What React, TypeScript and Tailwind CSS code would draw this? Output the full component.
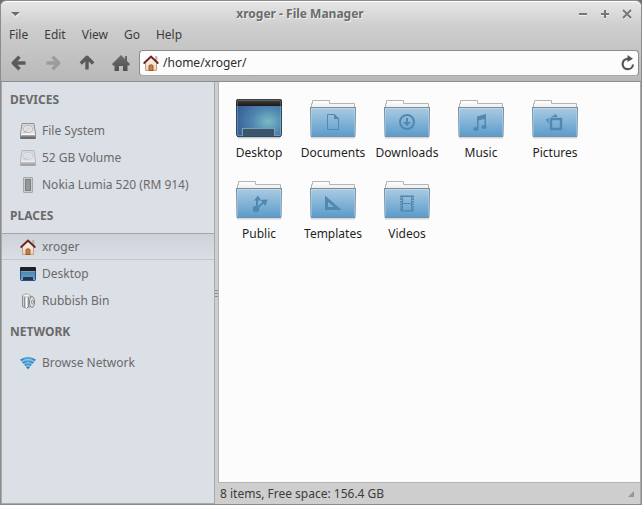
import { useState, type ReactNode } from 'react';

const menus = ['File', 'Edit', 'View', 'Go', 'Help'];

const sections = [
  {
    title: 'DEVICES',
    items: [
      { label: 'File System', icon: <DriveIcon /> },
      { label: '52 GB Volume', icon: <DriveIcon faded /> },
      { label: 'Nokia Lumia 520 (RM 914)', icon: <PhoneIcon /> },
    ],
  },
  {
    title: 'PLACES',
    items: [
      { label: 'xroger', icon: <HouseIcon /> },
      { label: 'Desktop', icon: <SmallDesktopIcon /> },
      { label: 'Rubbish Bin', icon: <BinIcon /> },
    ],
  },
  {
    title: 'NETWORK',
    items: [{ label: 'Browse Network', icon: <WifiIcon /> }],
  },
];

const files = [
  { label: 'Desktop', icon: <DesktopIcon /> },
  {
    label: 'Documents',
    icon: (
      <FolderIcon>
        <path d="M18.5 20.5h7l4 4v11h-11z" fill="none" stroke="#5088b0" />
        <path d="M25 20v5h5z" fill="#5088b0" />
      </FolderIcon>
    ),
  },
  {
    label: 'Downloads',
    icon: (
      <FolderIcon>
        <circle cx="24" cy="28" r="7" fill="none" stroke="#5088b0" strokeWidth="2" />
        <path d="M23 24h2v4h3l-4 4-4-4h3z" fill="#5088b0" />
      </FolderIcon>
    ),
  },
  {
    label: 'Music',
    icon: (
      <FolderIcon>
        <path d="M20 22.5l9-2.5v13h-1.5v-8l-6 1.6V35H20z" fill="#5088b0" />
        <ellipse cx="19" cy="35" rx="2.6" ry="2" fill="#5088b0" />
        <ellipse cx="27" cy="33" rx="2.6" ry="2" fill="#5088b0" />
      </FolderIcon>
    ),
  },
  {
    label: 'Pictures',
    icon: (
      <FolderIcon>
        <path d="M20 25h10v10H20z" fill="none" stroke="#5088b0" strokeWidth="2.4" />
        <path d="M20 23l5-3 1.5 3zM17.5 24v6L15 25.5z" fill="#5088b0" />
      </FolderIcon>
    ),
  },
  {
    label: 'Public',
    icon: (
      <FolderIcon>
        <circle cx="21" cy="34" r="3.2" fill="#5088b0" />
        <path d="M22 33V24M21.5 33.5l7-6" stroke="#5088b0" strokeWidth="2" fill="none" />
        <path d="M19 25.5l4-5 3 5zM25.5 25l7-.5-2 6.5z" fill="#5088b0" />
      </FolderIcon>
    ),
  },
  {
    label: 'Templates',
    icon: (
      <FolderIcon>
        <path d="M16 20.5L32.5 35H16zM19 27v5h6z" fill="#5088b0" fillRule="evenodd" />
      </FolderIcon>
    ),
  },
  {
    label: 'Videos',
    icon: (
      <FolderIcon>
        <path d="M18 21v15M30 21v15" stroke="#5088b0" strokeWidth="2" strokeDasharray="1.5 1" />
        <path d="M19.5 21.5h9v7h-9zM19.5 28.5h9V36h-9zM17 21h14M17 36h14" fill="none" stroke="#5088b0" />
      </FolderIcon>
    ),
  },
];

function Gradients() {
  return (
    <svg className="absolute size-0" aria-hidden="true">
      <defs>
        <linearGradient id="folder" x1="0" y1="0" x2="0" y2="1">
          <stop offset="0" stopColor="#abcbe2" />
          <stop offset="1" stopColor="#5b9bcb" />
        </linearGradient>
        <linearGradient id="tab" x1="0" y1="0" x2="0" y2="1">
          <stop offset="0" stopColor="#ffffff" />
          <stop offset="1" stopColor="#eaeaea" />
        </linearGradient>
        <radialGradient id="screen" cx="0.7" cy="0.6" r="0.7">
          <stop offset="0" stopColor="#78bac4" />
          <stop offset="0.5" stopColor="#4f87b0" />
          <stop offset="1" stopColor="#3a6397" />
        </radialGradient>
        <linearGradient id="smallScreen" x1="0" y1="0" x2="0" y2="1">
          <stop offset="0" stopColor="#3f73a6" />
          <stop offset="1" stopColor="#6fa8cd" />
        </linearGradient>
        <linearGradient id="bar" x1="0" y1="0" x2="0" y2="1">
          <stop offset="0" stopColor="#454545" />
          <stop offset="1" stopColor="#191919" />
        </linearGradient>
        <linearGradient id="drive" x1="0" y1="0" x2="0" y2="1">
          <stop offset="0" stopColor="#d2d2d2" />
          <stop offset="1" stopColor="#f4f4f4" />
        </linearGradient>
        <linearGradient id="driveBase" x1="0" y1="0" x2="0" y2="1">
          <stop offset="0" stopColor="#b4b4b4" />
          <stop offset="1" stopColor="#4c4c4c" />
        </linearGradient>
        <linearGradient id="wall" x1="0" y1="0" x2="0" y2="1">
          <stop offset="0" stopColor="#fbf7f2" />
          <stop offset="1" stopColor="#ecd0b8" />
        </linearGradient>
        <linearGradient id="wifi" x1="0" y1="0" x2="0" y2="1">
          <stop offset="0" stopColor="#5fb0de" />
          <stop offset="1" stopColor="#2874b4" />
        </linearGradient>
        <linearGradient id="tool" x1="0" y1="0" x2="0" y2="1">
          <stop offset="0" stopColor="#6e6e6e" />
          <stop offset="1" stopColor="#505050" />
        </linearGradient>
      </defs>
    </svg>
  );
}

function FolderIcon({ children }: { children: ReactNode }) {
  return (
    <svg width="48" height="48" viewBox="0 0 48 48" aria-hidden="true">
      <path d="M2 43.5h44" stroke="#000" strokeOpacity="0.15" strokeWidth="2" />
      <path d="M2.5 15V9.5h1v-3h17v3h25V15z" fill="url(#tab)" stroke="#b4b4b4" />
      <path d="M1.5 13.5h45l-.5 29H2z" fill="url(#folder)" stroke="#7292aa" strokeLinejoin="round" />
      <path d="M2.5 41.5v-27h43v27" fill="none" stroke="#fff" strokeOpacity="0.25" />
      <path d="M1 13.5h46" stroke="#7b8d9b" />
      {children}
    </svg>
  );
}

function DesktopIcon() {
  return (
    <svg width="48" height="48" viewBox="0 0 48 48" aria-hidden="true">
      <path d="M3 43.5h42" stroke="#000" strokeOpacity="0.2" strokeWidth="2" />
      <rect x="1.5" y="5.5" width="45" height="37" rx="2" fill="url(#screen)" stroke="#2d4566" />
      <path d="M1 12V7q0-2 2-2h42q2 0 2 2v5z" fill="url(#bar)" />
      <rect x="2.5" y="6.5" width="43" height="35" rx="1" fill="none" stroke="#fff" strokeOpacity="0.2" />
      <rect x="7.5" y="34.5" width="32" height="8" fill="#3b566c" stroke="#7c9fb6" />
      <path d="M2 42.5h44" stroke="#2d4566" />
    </svg>
  );
}

function DriveIcon({ faded = false }: { faded?: boolean }) {
  return (
    <svg width="16" height="16" viewBox="0 0 16 16" className={faded ? 'opacity-50' : ''} aria-hidden="true">
      <path d="M2 .5h12l1.5 10.5v4.5H.5V11z" fill="url(#drive)" stroke="#939393" strokeLinejoin="round" />
      <path d="M.5 12h15v3.5H.5z" fill="url(#driveBase)" />
      <path d="M1 11.5h14" stroke="#fafafa" />
      <ellipse cx="8" cy="6" rx="4.5" ry="3.5" fill="#e6e6e6" stroke="#bcbcbc" />
      <ellipse cx="8" cy="6" rx="1.5" ry="1" fill="#fff" stroke="#bcbcbc" strokeWidth="0.7" />
      <path d="M3.5 9.5L6.5 8" stroke="#a2a2a2" />
    </svg>
  );
}

function PhoneIcon() {
  return (
    <svg width="16" height="16" viewBox="0 0 16 16" aria-hidden="true">
      <rect x="3.5" y=".5" width="9" height="15" rx="0.5" fill="#c9cccf" stroke="#a4a6a8" />
      <rect x="5.5" y="2.5" width="5" height="11" fill="#92979a" stroke="#7b7f82" />
    </svg>
  );
}

function HouseIcon() {
  return (
    <svg width="16" height="16" viewBox="0 0 16 16" aria-hidden="true">
      <path d="M12.5 1.5H14v4h-1.500z" fill="#d8c4b4" stroke="#a58a78" strokeWidth="0.5" />
      <path d="M2.5 7.5L8 2.5l5.500 5v8h-11z" fill="url(#wall)" stroke="#c0a18b" />
      <path d="M6 15.5v-5q2-1.500 4 0v5z" fill="#c8803f" stroke="#8a4c22" strokeWidth="0.8" />
      <path d="M1.200 8L8 1.500 14.800 8" fill="none" stroke="#6a2222" strokeWidth="1.8" strokeLinecap="round" />
    </svg>
  );
}

function SmallDesktopIcon() {
  return (
    <svg width="16" height="16" viewBox="0 0 16 16" aria-hidden="true">
      <rect x=".5" y="1.5" width="15" height="13" rx="1" fill="url(#smallScreen)" stroke="#2d4f7c" />
      <path d="M0 5V2q0-1 1-1h14q1 0 1 1v3z" fill="#1d2024" />
      <path d="M1 5.5h14" stroke="#76a5c4" />
      <path d="M3 11h10v3H3z" fill="#22394f" />
    </svg>
  );
}

function BinIcon() {
  return (
    <svg width="16" height="16" viewBox="0 0 16 16" aria-hidden="true">
      <path d="M2.5 2.5q4-3 8 0v11q-4 3-8 0z" fill="#cfd1d3" stroke="#8b8e92" />
      <path d="M4.5 4v10M8.5 4v10" stroke="#8f9296" />
      <path d="M6.5 4v11" stroke="#fff" />
      <ellipse cx="6.500" cy="2.500" rx="3.500" ry="1.500" fill="#f2f2f2" stroke="#a8abae" strokeWidth="0.7" />
      <ellipse cx="12" cy="9" rx="2.500" ry="5.500" fill="#e4e4e4" stroke="#808387" />
      <ellipse cx="12.500" cy="9" rx="1" ry="2" fill="none" stroke="#808387" strokeWidth="0.8" />
    </svg>
  );
}

function WifiIcon() {
  return (
    <svg width="16" height="16" viewBox="0 0 16 16" fill="none" stroke="url(#wifi)" strokeWidth="2" aria-hidden="true">
      <path d="M8 14L.5 5.500q7.500-5.500 15 0z" fill="#8fc3e4" stroke="none" />
      <path d="M.7 5.300q7.300-5.200 14.600 0" />
      <path d="M2.800 7.800q5.200-3.800 10.400 0" />
      <path d="M4.900 10.200q3.100-2.400 6.200 0" />
      <path d="M6 12l2 2.200 2-2.200q-2-1.200-4 0z" fill="#2f7fbd" stroke="none" />
    </svg>
  );
}

function ArrowIcon({ className = '' }: { className?: string }) {
  return (
    <svg width="16" height="16" viewBox="0 0 16 16" className={className} aria-hidden="true">
      <path
        d="M14.500 8H3M8.500 1.800L2.300 8l6.200 6.200"
        fill="none"
        stroke="#5a5a5a"
        strokeWidth="3.4"
        strokeLinejoin="round"
      />
    </svg>
  );
}

function HomeIcon() {
  return (
    <svg width="18" height="16" viewBox="0 0 18 16" aria-hidden="true">
      <path d="M9 0l4 4V1h2v5l3 3-1 1.500h-1.500V16H11v-5H7v5H2.500v-5.500H1L0 9z" fill="url(#tool)" />
    </svg>
  );
}

function ReloadIcon() {
  return (
    <svg width="14" height="16" viewBox="0 0 14 16" aria-hidden="true">
      <path d="M12 9.500A5.200 5.200 0 1 1 7 3.800" fill="none" stroke="#555" strokeWidth="2.2" />
      <path d="M6.500 0l5.500 3.800-5.500 3.200z" fill="#555" />
    </svg>
  );
}

function TitleBar() {
  return (
    <header className="flex h-[23px] items-center px-2 text-[#6c6c6c]">
      <button aria-label="Window menu" className="w-5 pl-0.5">
        <svg width="10" height="6" viewBox="0 0 10 6">
          <path d="M1 2l4 4 4-4z" fill="#fff" />
          <path d="M0 1h9L4.500 5z" fill="#6c6c6c" />
        </svg>
      </button>
      <h1 className="flex-1 text-center text-xs font-bold [text-shadow:1px_1px_0_#eee]">xroger - File Manager</h1>
      <div className="flex w-[62px] justify-end gap-3 pr-px">
        <button aria-label="Minimise">
          <svg width="10" height="10" viewBox="0 0 10 10" strokeWidth="2" fill="none">
            <path d="M1 6h8" stroke="#eee" />
            <path d="M1 5h8" stroke="#777" />
          </svg>
        </button>
        <button aria-label="Maximise">
          <svg width="10" height="10" viewBox="0 0 10 10" strokeWidth="2" fill="none">
            <path d="M1 6h8M5 2v8" stroke="#eee" />
            <path d="M1 5h8M5 1v8" stroke="#777" />
          </svg>
        </button>
        <button aria-label="Close">
          <svg width="10" height="10" viewBox="0 0 10 10" strokeWidth="2" fill="none">
            <path d="M1 2l8 8M9 2l-8 8" stroke="#eee" />
            <path d="M1 1l8 8M9 1L1 9" stroke="#777" />
          </svg>
        </button>
      </div>
    </header>
  );
}

function Toolbar() {
  const [path, setPath] = useState('/home/xroger/');

  return (
    <div className="flex h-[37px] items-center border-b border-[#8d8d8d] pr-0.5 pb-px pl-[9px]">
      <div className="flex items-center gap-4">
        <button aria-label="Back" className="flex w-[18px] justify-center"><ArrowIcon /></button>
        <button aria-label="Forward" disabled className="flex w-[18px] justify-center"><ArrowIcon className="rotate-180 opacity-35" /></button>
        <button aria-label="Up" className="flex w-[18px] justify-center"><ArrowIcon className="rotate-90" /></button>
        <button aria-label="Home" className="flex w-[18px] justify-center"><HomeIcon /></button>
      </div>
      <div className="ml-[9px] flex h-[26px] flex-1 items-center rounded-sm border border-[#8c8c8c] border-b-[#a8a8a8] bg-[#fcfcfc] px-[3px]">
        <HouseIcon />
        <input
          aria-label="Location"
          value={path}
          onChange={(e) => setPath(e.target.value)}
          className="min-w-0 flex-1 bg-transparent px-1 text-xs text-[#2c2c2c] outline-none"
        />
        <button aria-label="Reload"><ReloadIcon /></button>
      </div>
    </div>
  );
}

function Sidebar() {
  const [active, setActive] = useState('xroger');

  return (
    <nav className="w-[213px] shrink-0 border-r border-b border-[#a9a9a9] bg-[#dbdfe6] text-[#6a6a6a]">
      {sections.map((section) => (
        <section key={section.title}>
          <h2 className="px-2 text-xs leading-[35px] font-bold">{section.title}</h2>
          {section.items.map(({ label, icon }) => (
            <button
              key={label}
              onClick={() => setActive(label)}
              className={`flex h-[27px] w-full items-center gap-1.5 border-y pl-[18px] text-xs ${
                active === label
                  ? 'border-t-[#a3a6ab] border-b-[#c3c7cd] bg-linear-to-b from-[#cdd1d9] to-[#dadee5]'
                  : 'border-transparent'
              }`}
            >
              {icon}
              {label}
            </button>
          ))}
        </section>
      ))}
    </nav>
  );
}

export default function App() {
  return (
    <div className="min-h-screen bg-[#6e6e6e]">
      <Gradients />
      <div className="flex min-h-screen flex-col rounded-t-md border border-[#8c8c8c] bg-[#cecece] font-['Noto_Sans',sans-serif] text-xs text-[#3c3c3c]">
        <div className="rounded-t-md border-t border-white bg-linear-to-b from-[#e6e6e6] via-[#cecece] via-30% to-[#b8b8b8]">
          <TitleBar />
          <div className="flex h-5 items-center gap-4 px-2">
            {menus.map((menu) => (
              <button key={menu}>{menu}</button>
            ))}
          </div>
          <Toolbar />
        </div>
        <div className="flex flex-1 border-x border-[#a9a9a9]">
          <Sidebar />
          <div className="flex w-[3px] shrink-0 flex-col items-center justify-center gap-0.5">
            <span className="h-px w-full bg-[#8c8c8c]" />
            <span className="h-px w-full bg-[#8c8c8c]" />
            <span className="h-px w-full bg-[#8c8c8c]" />
          </div>
          <div className="flex min-w-0 flex-1 flex-col">
            <main className="flex flex-1 flex-wrap content-start border-b border-l border-[#b4b4b4] bg-[#fcfcfc] px-[3px] pt-3">
              {files.map(({ label, icon }) => (
                <button key={label} className="flex h-[81px] w-[74px] flex-col items-center text-[#1f1f1f]">
                  {icon}
                  <span className="leading-[22px]">{label}</span>
                </button>
              ))}
            </main>
            <footer className="flex h-[21px] items-center justify-between pr-1.5 pl-0.5">
              <span>8 items, Free space: 156.4 GB</span>
              <svg width="6" height="6" viewBox="0 0 6 6" aria-hidden="true">
                <path d="M0 6L6 0v6z" fill="#959595" />
              </svg>
            </footer>
          </div>
        </div>
      </div>
    </div>
  );
}
